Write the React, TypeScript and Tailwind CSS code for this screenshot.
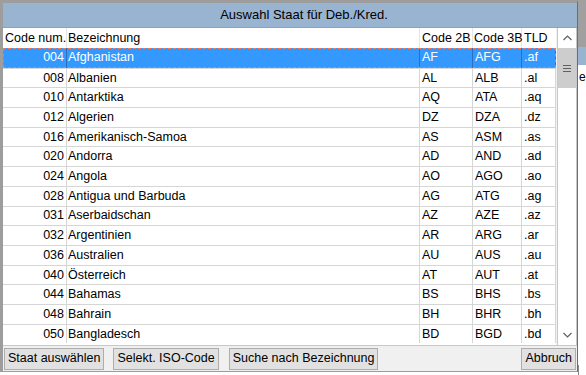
const rows = [
    ['004', 'Afghanistan', 'AF', 'AFG', '.af'],
    ['008', 'Albanien', 'AL', 'ALB', '.al'],
    ['010', 'Antarktika', 'AQ', 'ATA', '.aq'],
    ['012', 'Algerien', 'DZ', 'DZA', '.dz'],
    ['016', 'Amerikanisch-Samoa', 'AS', 'ASM', '.as'],
    ['020', 'Andorra', 'AD', 'AND', '.ad'],
    ['024', 'Angola', 'AO', 'AGO', '.ao'],
    ['028', 'Antigua und Barbuda', 'AG', 'ATG', '.ag'],
    ['031', 'Aserbaidschan', 'AZ', 'AZE', '.az'],
    ['032', 'Argentinien', 'AR', 'ARG', '.ar'],
    ['036', 'Australien', 'AU', 'AUS', '.au'],
    ['040', 'Österreich', 'AT', 'AUT', '.at'],
    ['044', 'Bahamas', 'BS', 'BHS', '.bs'],
    ['048', 'Bahrain', 'BH', 'BHR', '.bh'],
    ['050', 'Bangladesch', 'BD', 'BGD', '.bd'],
]

function Btn({label}: {label: string}) {
    return (
        <button className="h-[22px] px-[3px] bg-[#e1e1e1] border border-[#adadad] text-[12.5px] leading-none text-black whitespace-nowrap">
            {label}
        </button>
    )
}

export default function App() {
    return (
        <div className="w-[586px] h-[375px] flex bg-white overflow-hidden text-[12.5px] text-black whitespace-nowrap"
             style={{fontFamily: '"Liberation Sans", Arial, sans-serif'}}>
            <div className="w-[578px] h-[372px] flex flex-col bg-[#f0f0f0] border-l-[3px] border-t-[3px] border-r border-b border-[#9d9d9d] border-r-[#6e6e6e]">
                {/* title */}
                <div className="h-[25px] shrink-0 bg-[#99b4d1] flex items-center justify-center pl-[28px] text-[13px] border-b border-[#8aa2bd]">
                    Auswahl Staat für Deb./Kred.
                </div>
                <div className="flex flex-1 min-h-0">
                    {/* grid */}
                    <div className="w-[553px] flex flex-col bg-white">
                        <div className="h-[20px] flex items-center shrink-0">
                            <div className="w-[64px] h-full pl-[2px] flex items-center border-r border-[#e5e5e5]">Code num.</div>
                            <div className="w-[353px] h-full pl-[1px] flex items-center border-r border-[#e5e5e5]">Bezeichnung</div>
                            <div className="w-[53px] h-full pl-[2px] flex items-center border-r border-[#e5e5e5]">Code 2B</div>
                            <div className="w-[49px] h-full pl-[1px] flex items-center border-r border-[#e5e5e5]">Code 3B</div>
                            <div className="w-[34px] h-full pl-[2px] flex items-center">TLD</div>
                        </div>
                        {rows.map((r, i) => {
                            const sel = i === 0
                            const line = sel ? 'border-r border-[#2a6fc0]' : 'border-r border-[#d6d6d6]'
                            return (
                                <div key={r[0]}
                                     className={`h-[19.7px] flex relative ${sel ? 'bg-[#3399ff] text-white' : 'border-t border-[#d6d6d6]'}`}>
                                    <div className={`w-[64px] h-full pr-[2px] flex items-center justify-end ${line}`}>{r[0]}</div>
                                    <div className={`w-[353px] h-full pl-[1px] flex items-center ${line}`}>{r[1]}</div>
                                    <div className={`w-[53px] h-full pl-[2px] flex items-center ${line}`}>{r[2]}</div>
                                    <div className={`w-[49px] h-full pl-[2px] flex items-center ${line}`}>{r[3]}</div>
                                    <div className={`w-[34px] h-full pl-[2px] flex items-center ${line}`}>{r[4]}</div>
                                    {sel && <div className="absolute inset-0 border border-dashed border-[#f07a5a]"/>}
                                </div>
                            )
                        })}
                    </div>
                    {/* scrollbar */}
                    <div className="w-[21px] flex flex-col bg-white border-l border-[#c8c8c8] border-r border-r-[#c8c8c8] ml-[1px]">
                        <div className="h-[20px] flex items-center justify-center text-[#606060]">
                            <svg width="9" height="6" viewBox="0 0 9 6"><path d="M0.5 5 L4.5 1 L8.5 5" fill="none" stroke="currentColor" strokeWidth="1.2"/></svg>
                        </div>
                        <div className="h-[40px] bg-[#cdcdcd] flex items-center justify-center">
                            <div className="flex flex-col gap-[2px]">
                                <div className="w-[8px] h-[1px] bg-[#606060]"/>
                                <div className="w-[8px] h-[1px] bg-[#606060]"/>
                                <div className="w-[8px] h-[1px] bg-[#606060]"/>
                            </div>
                        </div>
                        <div className="flex-1"/>
                        <div className="h-[20px] flex items-center justify-center text-[#606060]">
                            <svg width="9" height="6" viewBox="0 0 9 6"><path d="M0.5 1 L4.5 5 L8.5 1" fill="none" stroke="currentColor" strokeWidth="1.2"/></svg>
                        </div>
                    </div>
                </div>
                {/* buttons */}
                <div className="h-[26px] shrink-0 flex items-center pl-[1px] pr-[1px] border-t border-[#c8c8c8]">
                    <Btn label="Staat auswählen"/>
                    <div className="w-[9px]"/>
                    <Btn label="Selekt. ISO-Code"/>
                    <div className="w-[10px]"/>
                    <Btn label="Suche nach Bezeichnung"/>
                    <div className="flex-1"/>
                    <Btn label="Abbruch"/>
                </div>
            </div>
            {/* background app strip */}
            <div className="flex-1 flex flex-col bg-white">
                <div className="h-[47px] bg-[#a0a0a0]"/>
                <div className="h-[18px] bg-[#99b4d1]"/>
                <div className="h-[6px]"/>
                <div className="text-[12px] leading-none pl-[1px]">e</div>
                <div className="flex-1"/>
                <div className="h-[10px] border-l border-[#888]"/>
            </div>
        </div>
    )
}
